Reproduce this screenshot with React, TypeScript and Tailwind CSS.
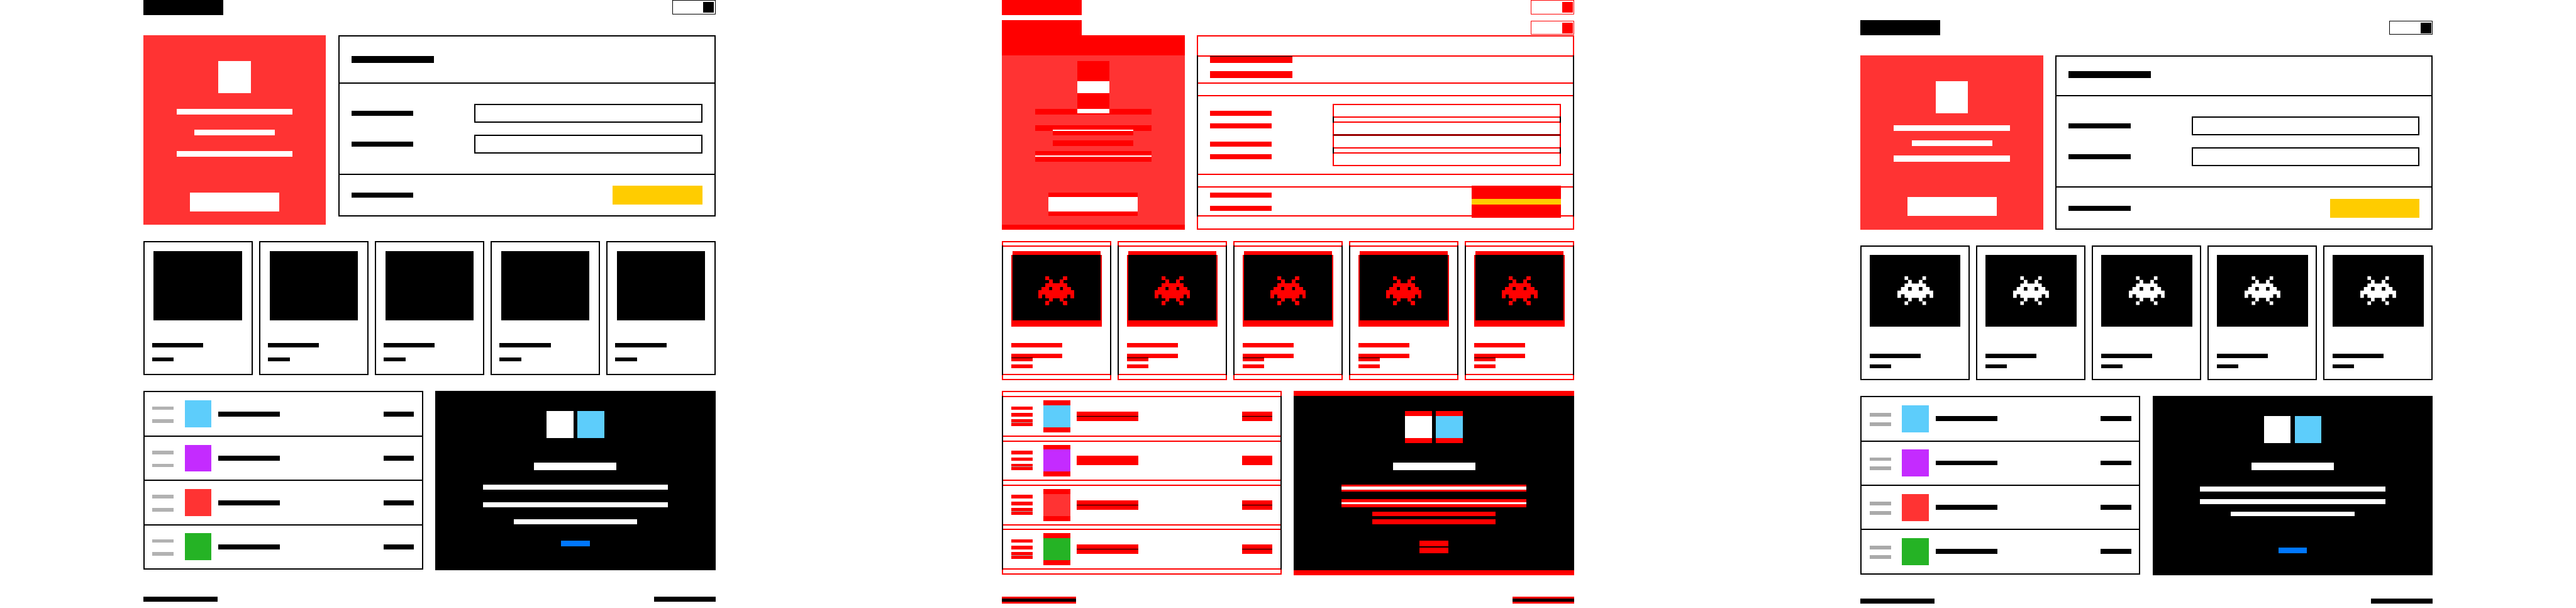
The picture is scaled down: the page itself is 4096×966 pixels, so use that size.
type Variant = "before" | "after";

interface Spacing {
  header: string;
  hero: string;
  heroBar1: string;
  heroBar: string;
  form: string;
  formHead: string;
  art: string;
  itemTitle: string;
  itemPrice: string;
  rowMeta: string;
  rowTitle: string;
  promoTitle: string;
  promoLine1: string;
  promoLine: string;
  promoLink: string;
  footer: string;
}

const spacing: Record<Variant, Spacing> = {
  before: {
    header: "items-start",
    hero: "h-423",
    heroBar1: "mt-35",
    heroBar: "mt-34",
    form: "h-405",
    formHead: "h-105 pt-43",
    art: "mx-3 mt-3 h-154",
    itemTitle: "mt-50",
    itemPrice: "mt-23",
    rowMeta: "mt-31 gap-21 text-[#b2b2b2]",
    rowTitle: "mt-43",
    promoTitle: "mt-55",
    promoLine1: "mt-33",
    promoLine: "mt-28",
    promoLink: "mt-36",
    footer: "mt-59",
  },
  after: {
    header: "items-center mt-45",
    hero: "h-389",
    heroBar1: "mt-27",
    heroBar: "mt-21",
    form: "h-389",
    formHead: "h-89 pt-32",
    art: "h-160",
    itemTitle: "mt-60",
    itemPrice: "mt-15",
    rowMeta: "mt-35 gap-13 text-[#aaaaaa]",
    rowTitle: "mt-42",
    promoTitle: "mt-44",
    promoLine1: "mt-37",
    promoLine: "mt-17",
    promoLink: "mt-70",
    footer: "mt-53",
  },
};

const rowColors = ["bg-[#5dcdfb]", "bg-[#c42bff]", "bg-[#ff3333]", "bg-[#25b325]"];

function Invader() {
  return (
    <svg viewBox="0 0 10 8" className="h-64 w-80 fill-white">
      <path d="M2 0h1v1h1v1h2v-1h1v-1h1v1h-1v1h1v1h1v1h1v2h-1v-1h-1v1h-1v1h1v1h-1v-1h-1v-1h-2v1h-1v1h-1v-1h1v-1h-1v-1h-1v1h-1v-2h1v-1h1v-1h1v-1h-1zM3 3v1h1v-1zM6 3v1h1v-1z" />
    </svg>
  );
}

function Hero({ s }: { s: Spacing }) {
  return (
    <section className="mt-45 flex shrink-0 items-start justify-between">
      <div className={`flex w-409 flex-col items-center bg-[#ff3333] pt-57 ${s.hero}`}>
        <div className="size-72 bg-white" />
        <div className={`h-13 w-260 bg-white ${s.heroBar1}`} />
        <div className={`h-13 w-180 bg-white ${s.heroBar}`} />
        <div className={`h-13 w-260 bg-white ${s.heroBar}`} />
        <div className="mt-80 h-42 w-200 bg-white" />
      </div>
      <div className={`flex w-844 flex-col border-2 border-black ${s.form}`}>
        <div className={`shrink-0 border-b-2 border-black px-27 ${s.formHead}`}>
          <div className="h-16 w-184 bg-black" />
        </div>
        <div className="flex h-204 shrink-0 flex-col gap-27 border-b-2 border-black px-27 pt-45">
          {[0, 1].map((i) => (
            <div key={i} className="flex items-center justify-between">
              <div className="h-11 w-138 bg-black" />
              <div className="h-42 w-510 border-2 border-black" />
            </div>
          ))}
        </div>
        <div className="flex flex-1 items-center justify-between px-27">
          <div className="h-11 w-138 bg-black" />
          <div className="h-42 w-200 bg-[#ffcc00]" />
        </div>
      </div>
    </section>
  );
}

function Products({ s, variant }: { s: Spacing; variant: Variant }) {
  return (
    <section className="mt-36 grid h-300 shrink-0 grid-cols-5 gap-14">
      {[0, 1, 2, 3, 4].map((i) => (
        <div key={i} className="border-2 border-black p-18">
          <div className={`flex items-center justify-center bg-black ${s.art}`}>
            {variant === "after" && <Invader />}
          </div>
          <div className={`h-10 w-114 bg-black ${s.itemTitle}`} />
          <div className={`h-8 w-48 bg-black ${s.itemPrice}`} />
        </div>
      ))}
    </section>
  );
}

function ListAndPromo({ s }: { s: Spacing }) {
  return (
    <section className="mt-36 flex h-400 shrink-0 items-start justify-between">
      <div className="h-399 w-626 border-2 border-black">
        {rowColors.map((color) => (
          <div
            key={color}
            className="flex h-99 items-start border-b-2 border-black px-18 last:h-96 last:border-b-0"
          >
            <div className={`flex flex-col ${s.rowMeta}`}>
              <div className="h-8 w-48 bg-current" />
              <div className="h-8 w-48 bg-current" />
            </div>
            <div className={`mt-18 ml-24 size-60 ${color}`} />
            <div className={`ml-15 h-11 w-138 bg-black ${s.rowTitle}`} />
            <div className={`ml-auto h-11 w-68 bg-black ${s.rowTitle}`} />
          </div>
        ))}
      </div>
      <div className="flex h-400 w-627 flex-col items-center bg-black pt-45">
        <div className="flex gap-9">
          <div className="size-60 bg-white" />
          <div className="size-60 bg-[#5dcdfb]" />
        </div>
        <div className={`h-16 w-184 bg-white ${s.promoTitle}`} />
        <div className={`h-11 w-414 bg-white ${s.promoLine1}`} />
        <div className={`h-11 w-414 bg-white ${s.promoLine}`} />
        <div className={`h-11 w-276 bg-white ${s.promoLine}`} />
        <div className={`h-13 w-64 bg-[#0077ff] ${s.promoLink}`} />
      </div>
    </section>
  );
}

function Page({ variant }: { variant: Variant }) {
  const s = spacing[variant];
  return (
    <div className="flex h-1358 w-1920 flex-col overflow-hidden bg-white px-320">
      <header className={`flex h-34 shrink-0 justify-between ${s.header}`}>
        <div className="h-34 w-179 bg-black" />
        <div className="flex h-32 w-97 items-center justify-end border-[1.4px] border-black pr-2">
          <div className="size-24 bg-black" />
        </div>
      </header>
      <Hero s={s} />
      <Products s={s} variant={variant} />
      <ListAndPromo s={s} />
      <footer className={`flex shrink-0 justify-between ${s.footer}`}>
        <div className="h-11 w-166 bg-black" />
        <div className="h-11 w-138 bg-black" />
      </footer>
    </div>
  );
}

/* Shows the "after" page, with every pixel that changed painted red. */
function Diff() {
  return (
    <div className="grid">
      <div className="col-start-1 row-start-1">
        <Page variant="after" />
      </div>
      <div className="isolate col-start-1 row-start-1 grid [filter:url(#changed)]">
        <div className="col-start-1 row-start-1">
          <Page variant="after" />
        </div>
        <div className="col-start-1 row-start-1 mix-blend-difference">
          <Page variant="before" />
        </div>
      </div>
    </div>
  );
}

export default function App() {
  return (
    <main className="flex h-[966px] w-[4096px] overflow-hidden bg-white [--spacing:0.711111px]">
      <svg className="absolute size-0" aria-hidden="true">
        <filter id="changed" x="0" y="0" width="100%" height="100%" colorInterpolationFilters="sRGB">
          <feColorMatrix type="matrix" values="0 0 0 0 1  0 0 0 0 0  0 0 0 0 0  2 2 2 0 -0.3" />
        </filter>
      </svg>
      <Page variant="before" />
      <Diff />
      <Page variant="after" />
    </main>
  );
}
